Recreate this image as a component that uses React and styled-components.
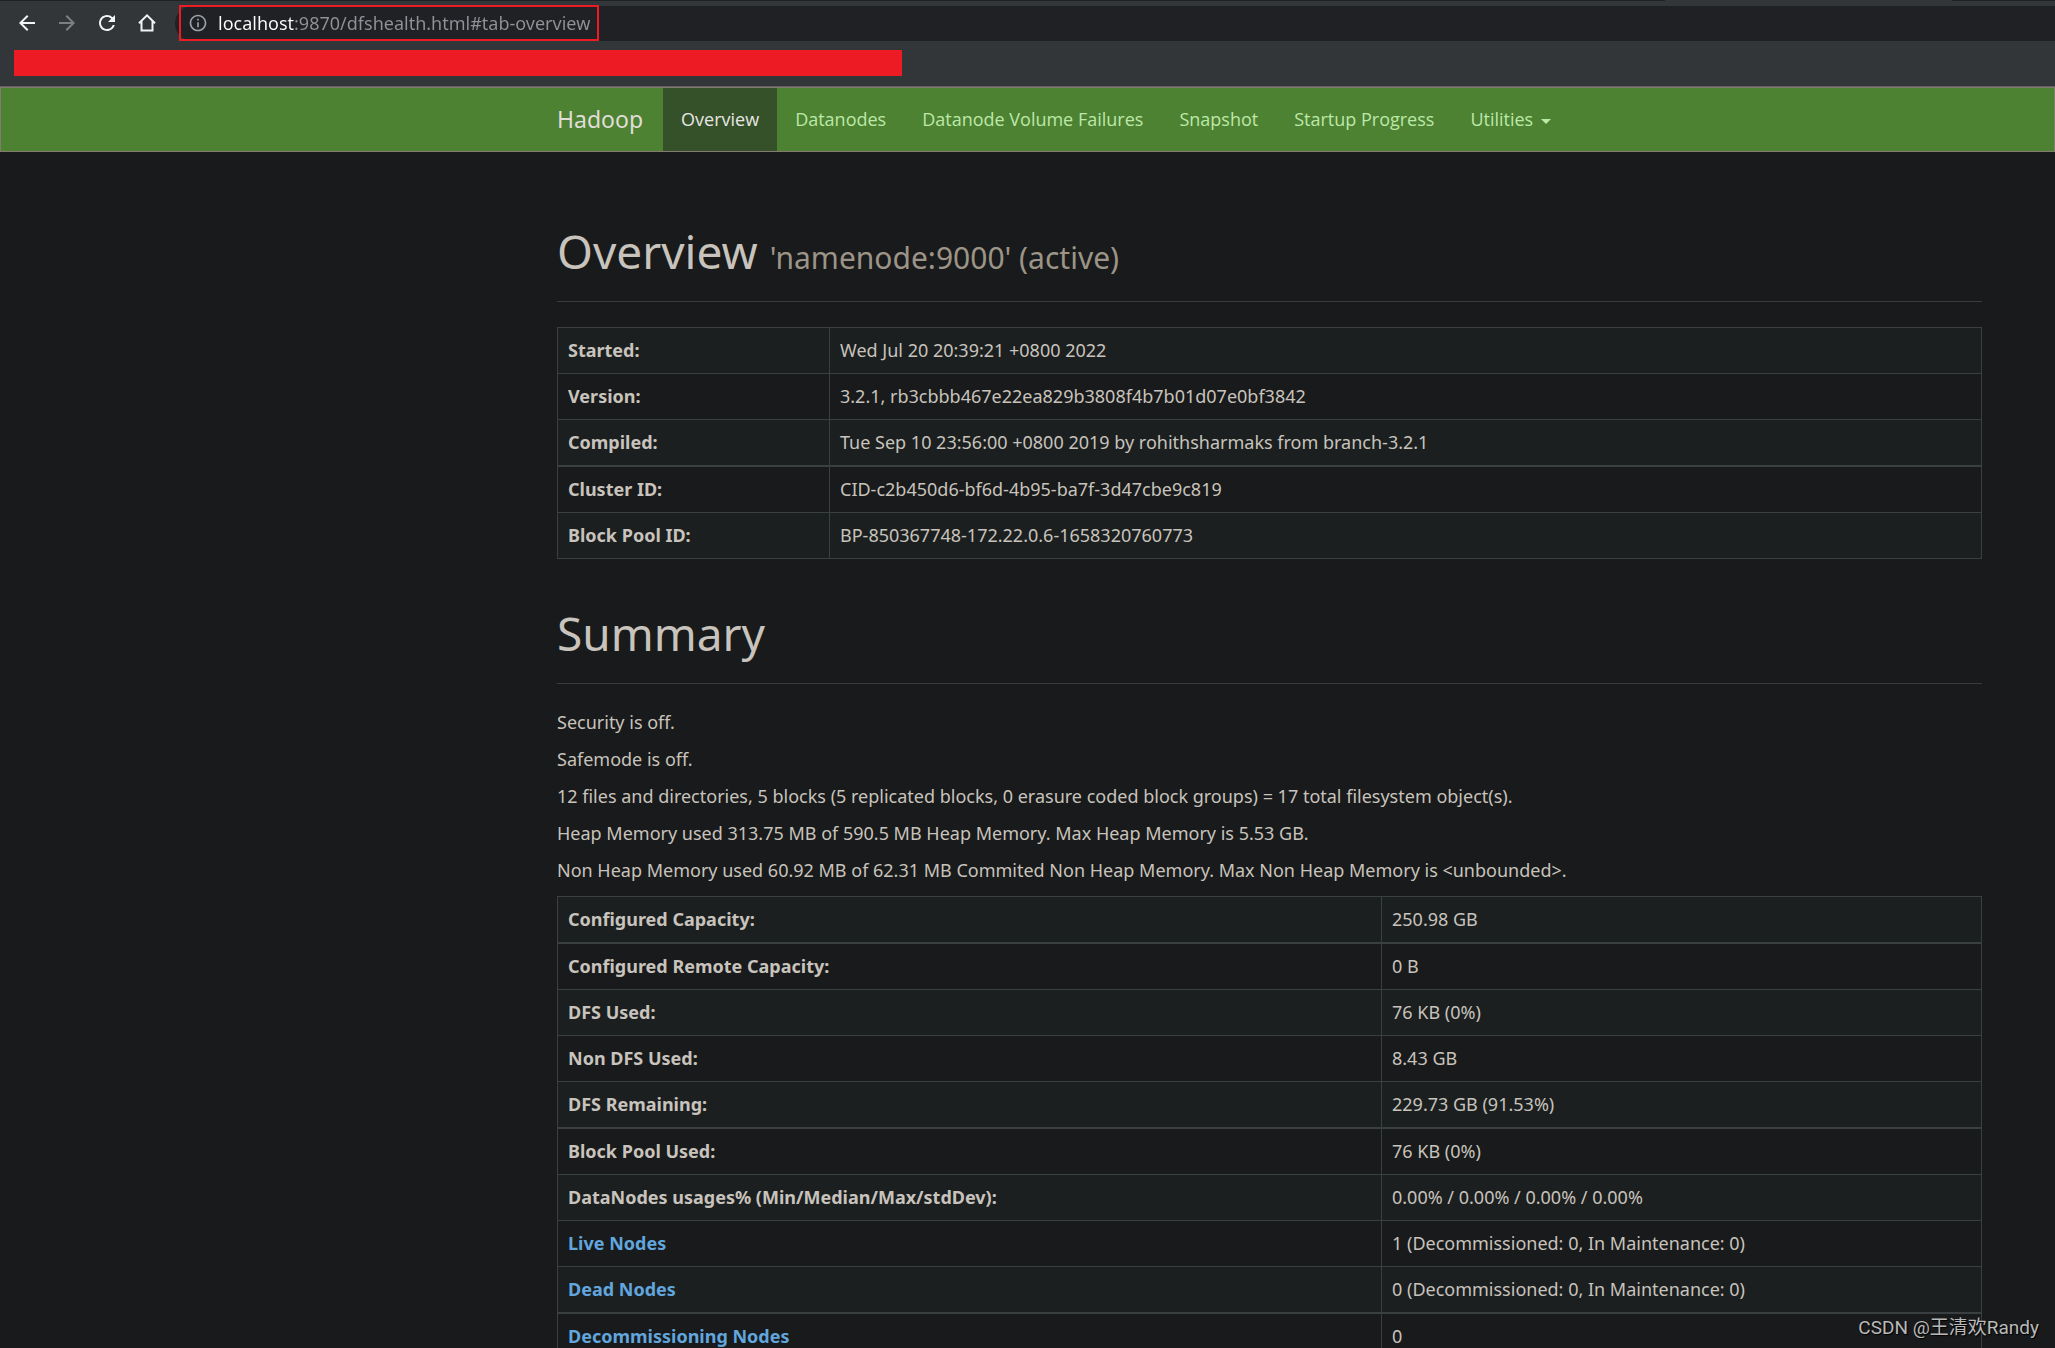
/**
 * External dependencies
 */
import styled, { createGlobalStyle } from 'styled-components';
import { MdArrowBack, MdArrowForward, MdRefresh, MdOutlineInfo } from 'react-icons/md';

const CONTENT_LEFT = 557;
const CONTENT_RIGHT = 73;

const GlobalStyle = createGlobalStyle`
	* {
		box-sizing: border-box;
	}

	body {
		margin: 0;
		background: #181a1b;
		color: #c8c3bc;
		font-family: "Noto Sans", "Open Sans", sans-serif;
		font-size: 18px;
		line-height: 25px;
	}
`;

const Window = styled.div`
	position: relative;
	display: flex;
	flex-direction: column;
	height: 100vh;
	overflow: hidden;
`;

const Chrome = styled.header`
	background: #323639;
	border-bottom: 1px solid #5f6163;
	flex: none;
`;

const TabStrip = styled.div`
	display: flex;
	justify-content: space-between;
	height: 1px;
	margin-bottom: 5px;
`;

const TabEdge = styled.span`
	width: ${ ( { share } ) => share }%;
	background: #202124;
`;

const Toolbar = styled.div`
	display: flex;
	align-items: center;
	height: 35px;
	padding-left: 15px;
`;

const ToolButtons = styled.div`
	display: flex;
	gap: 17px;
	margin-right: 17px;
	padding-bottom: 1px;
`;

const ToolButton = styled.button`
	display: flex;
	align-items: center;
	justify-content: center;
	width: 23px;
	height: 24px;
	padding: 0;
	border: 0;
	background: none;
	color: #f1f3f4;

	&:disabled {
		color: #7d8083;
	}

	svg {
		width: 24px;
		height: 24px;
		flex: none;
	}
`;

const Omnibox = styled.div`
	display: flex;
	align-items: flex-end;
	flex: 1;
	height: 35px;
	padding-left: 4px;
	border-radius: 18px 0 0 18px;
	background: #202124;
`;

const AddressFrame = styled.label`
	display: flex;
	align-items: center;
	gap: 10px;
	width: 420px;
	height: 36px;
	padding: 0 7px;
	border: 2px solid #ed1c24;
	color: #9aa0a6;

	svg {
		width: 20px;
		height: 20px;
		flex: none;
	}
`;

const Address = styled.input`
	flex: 1;
	min-width: 0;
	padding: 0;
	border: 0;
	outline: 0;
	font: inherit;
	color: transparent;
	background: linear-gradient( 90deg, #ffffff 77px, #8f9296 77px );
	background-clip: text;
	-webkit-background-clip: text;
`;

const Bookmarks = styled.div`
	padding: 9px 14px 10px;
`;

const Redaction = styled.div`
	width: 888px;
	max-width: 100%;
	height: 26px;
	background: #ed1c24;
`;

const Navbar = styled.nav`
	display: flex;
	flex: none;
	height: 65px;
	padding: 0 ${ CONTENT_RIGHT }px 0 ${ CONTENT_LEFT - 1 }px;
	border: 1px solid #837b6f;
	background: #4d8232;
`;

const Brand = styled.a`
	display: flex;
	align-items: center;
	padding-right: 20px;
	font-size: 23px;
	color: #e0ddd8;
	text-decoration: none;
`;

const NavList = styled.ul`
	display: flex;
	margin: 0;
	padding: 0;
	list-style: none;
	font-family: "Open Sans", "Noto Sans", sans-serif;
`;

const NavLink = styled.a`
	display: flex;
	align-items: center;
	gap: 8px;
	height: 100%;
	padding: 0 18px;
	border: 0;
	background: ${ ( { $active } ) => $active ? '#355129' : 'none' };
	color: ${ ( { $active } ) => $active ? '#e8e6e3' : '#bde8a8' };
	font: inherit;
	text-decoration: none;
	white-space: nowrap;
`;

const Caret = styled.span`
	border-top: 5px solid;
	border-left: 5px solid transparent;
	border-right: 5px solid transparent;
	margin-top: 4px;
`;

const Page = styled.main`
	flex: 1;
	min-height: 0;
	overflow: hidden;
	padding: 75px ${ CONTENT_RIGHT }px 0 ${ CONTENT_LEFT }px;
`;

const PageHeader = styled.div`
	padding-bottom: 26px;
	margin-bottom: 25px;
	border-bottom: 1px solid #373c3e;
`;

const Title = styled.h1`
	margin: 0;
	font-size: 46px;
	font-weight: 400;
	line-height: 48px;

	small {
		font-size: 30px;
		line-height: 1;
		color: #9d9488;
	}
`;

const Section = styled.section`
	margin-bottom: 50px;
`;

const Messages = styled.div`
	padding: 1px 0;
`;

const Message = styled.p`
	margin: 0;
	padding-bottom: 12px;
`;

const Table = styled.table`
	width: 100%;
	table-layout: fixed;
	border-collapse: separate;
	border-spacing: 0;
	border-top: 1px solid #3a3f41;
	border-left: 1px solid #3a3f41;

	th,
	td {
		height: 46px;
		padding: 0 10px;
		border: solid #3a3f41;
		border-width: 0 1px 1px 0;
		text-align: left;
	}

	th {
		width: ${ ( { $labelWidth } ) => $labelWidth };
		font-weight: 700;
	}

	tr:nth-child(odd) {
		background: #1b1f20;
	}

	tr:nth-child(4n + ${ ( { $ruleRow } ) => $ruleRow }) > * {
		height: 47px;
		border-bottom-width: 2px;
	}
`;

const TableLink = styled.a`
	color: #61a6dd;
	text-decoration: none;
`;

const Watermark = styled.div`
	position: absolute;
	right: 16px;
	bottom: 8px;
	font-family: Roboto, "Noto Sans CJK SC", sans-serif;
	font-size: 19px;
	color: #b9b9b9;
	text-shadow: 1px 1px 1px #000000;
`;

const NAV_ITEMS = [
	{ label: 'Overview', href: '#tab-overview', active: true },
	{ label: 'Datanodes', href: '#tab-datanode' },
	{ label: 'Datanode Volume Failures', href: '#tab-datanode-volume-failures' },
	{ label: 'Snapshot', href: '#tab-snapshot' },
	{ label: 'Startup Progress', href: '#tab-startup-progress' },
];

const OVERVIEW_ROWS = [
	{ label: 'Started:', value: 'Wed Jul 20 20:39:21 +0800 2022' },
	{ label: 'Version:', value: '3.2.1, rb3cbbb467e22ea829b3808f4b7b01d07e0bf3842' },
	{ label: 'Compiled:', value: 'Tue Sep 10 23:56:00 +0800 2019 by rohithsharmaks from branch-3.2.1' },
	{ label: 'Cluster ID:', value: 'CID-c2b450d6-bf6d-4b95-ba7f-3d47cbe9c819' },
	{ label: 'Block Pool ID:', value: 'BP-850367748-172.22.0.6-1658320760773' },
];

const SUMMARY_LINES = [
	'Security is off.',
	'Safemode is off.',
	'12 files and directories, 5 blocks (5 replicated blocks, 0 erasure coded block groups) = 17 total filesystem object(s).',
	'Heap Memory used 313.75 MB of 590.5 MB Heap Memory. Max Heap Memory is 5.53 GB.',
	'Non Heap Memory used 60.92 MB of 62.31 MB Commited Non Heap Memory. Max Non Heap Memory is <unbounded>.',
];

const SUMMARY_ROWS = [
	{ label: 'Configured Capacity:', value: '250.98 GB' },
	{ label: 'Configured Remote Capacity:', value: '0 B' },
	{ label: 'DFS Used:', value: '76 KB (0%)' },
	{ label: 'Non DFS Used:', value: '8.43 GB' },
	{ label: 'DFS Remaining:', value: '229.73 GB (91.53%)' },
	{ label: 'Block Pool Used:', value: '76 KB (0%)' },
	{ label: 'DataNodes usages% (Min/Median/Max/stdDev):', value: '0.00% / 0.00% / 0.00% / 0.00%' },
	{ label: 'Live Nodes', href: '#tab-datanode', value: '1 (Decommissioned: 0, In Maintenance: 0)' },
	{ label: 'Dead Nodes', href: '#tab-datanode', value: '0 (Decommissioned: 0, In Maintenance: 0)' },
	{ label: 'Decommissioning Nodes', href: '#tab-datanode', value: '0' },
];

function HomeIcon() {
	return (
		<svg viewBox="0 0 24 24" fill="none" stroke="currentColor" strokeWidth="2">
			<path d="M4 12.2 12 4.4l8 7.8M6.5 10.5V19.5h11V10.5" />
		</svg>
	);
}

function DataTable( { rows, labelWidth, ruleRow } ) {
	return (
		<Table $labelWidth={ labelWidth } $ruleRow={ ruleRow }>
			<tbody>
				{ rows.map( ( { label, href, value } ) => (
					<tr key={ label }>
						<th scope="row">
							{ href ? <TableLink href={ href }>{ label }</TableLink> : label }
						</th>
						<td>{ value }</td>
					</tr>
				) ) }
			</tbody>
		</Table>
	);
}

function BrowserChrome() {
	return (
		<Chrome>
			<TabStrip>
				<TabEdge share={ 81 } />
				<TabEdge share={ 5 } />
			</TabStrip>
			<Toolbar>
				<ToolButtons>
					<ToolButton aria-label="Back"><MdArrowBack /></ToolButton>
					<ToolButton aria-label="Forward" disabled><MdArrowForward /></ToolButton>
					<ToolButton aria-label="Reload"><MdRefresh /></ToolButton>
					<ToolButton aria-label="Home"><HomeIcon /></ToolButton>
				</ToolButtons>
				<Omnibox>
					<AddressFrame>
						<MdOutlineInfo />
						<Address
							aria-label="Address"
							spellCheck={ false }
							defaultValue="localhost:9870/dfshealth.html#tab-overview"
						/>
					</AddressFrame>
				</Omnibox>
			</Toolbar>
			<Bookmarks>
				<Redaction />
			</Bookmarks>
		</Chrome>
	);
}

function App() {
	return (
		<>
			<GlobalStyle />
			<Window>
				<BrowserChrome />
				<Navbar>
					<Brand href="#">Hadoop</Brand>
					<NavList>
						{ NAV_ITEMS.map( ( { label, href, active } ) => (
							<li key={ label }>
								<NavLink href={ href } $active={ active }>{ label }</NavLink>
							</li>
						) ) }
						<li>
							<NavLink as="button" type="button" aria-haspopup="menu">
								Utilities
								<Caret />
							</NavLink>
						</li>
					</NavList>
				</Navbar>
				<Page>
					<Section>
						<PageHeader>
							<Title>
								Overview <small>{ '\'namenode:9000\' (active)' }</small>
							</Title>
						</PageHeader>
						<DataTable rows={ OVERVIEW_ROWS } labelWidth="272px" ruleRow={ 3 } />
					</Section>
					<Section>
						<PageHeader>
							<Title>Summary</Title>
						</PageHeader>
						<Messages>
							{ SUMMARY_LINES.map( ( line ) => (
								<Message key={ line }>{ line }</Message>
							) ) }
						</Messages>
						<DataTable rows={ SUMMARY_ROWS } labelWidth="824px" ruleRow={ 1 } />
					</Section>
				</Page>
				<Watermark>CSDN @王清欢Randy</Watermark>
			</Window>
		</>
	);
}

export default App;
